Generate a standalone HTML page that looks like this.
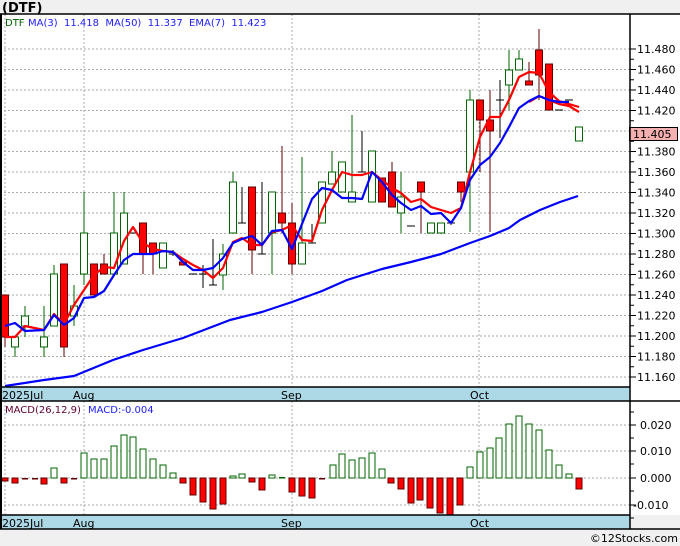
<!DOCTYPE html>
<html><head><meta charset="utf-8"><style>
body{margin:0;width:680px;height:546px;background:#f0f0f0;overflow:hidden;font-family:"DejaVu Sans","Liberation Sans",sans-serif}
svg{position:absolute;left:0;top:0}
</style></head><body>
<svg id="s" width="680" height="546" xmlns="http://www.w3.org/2000/svg" font-family="DejaVu Sans, Liberation Sans, sans-serif">
<rect x="0" y="14" width="680" height="501" fill="#fff"/>
<text x="2" y="12" font-size="13" font-weight="bold" fill="#000">(DTF)</text>
<g id="g"></g>
</svg>
<script>
var g=document.getElementById('g'),h='';
function L(x1,y1,x2,y2,c,w,d){h+='<line x1="'+x1+'" y1="'+y1+'" x2="'+x2+'" y2="'+y2+'" stroke="'+c+'" stroke-width="'+(w||1)+'"'+(d?' stroke-dasharray="'+d+'"':'')+'/>';}
function T(x,y,t,c,s,a){h+='<text x="'+x+'" y="'+y+'" font-size="'+(s||11)+'" fill="'+c+'"'+(a?' text-anchor="'+a+'"':'')+'>'+t+'</text>';}
for(var k=0;k<=16;k++){var y=49+20.5*k;L(0,y,630,y,'#aaa',1,'2,2');L(630,y,636,y,'#000');if(k<16)L(630,y+10.25,634,y+10.25,'#000');
 var p=(11.48-0.02*k).toFixed(3);if(p!='11.400')T(637,y+4,p,'#000');}
[5,84,292,479].forEach(function(x){L(x,14,x,387,'#aaa',1,'2,2');L(x,401,x,515,'#aaa',1,'2,2');});
[[425,'0.020'],[451,'0.010'],[478,'0.000'],[505,'-0.010']].forEach(function(a){L(0,a[0],630,a[0],'#aaa',1,'2,2');L(630,a[0],636,a[0],'#000');T(a[1][0]=='-'?633:640,a[0]+4,a[1],'#000');});
[412,438,464,491,518].forEach(function(y){L(630,y,634,y,'#000');});
var C=[[5,295,337,295,347,'r'],[15,337,347,337,357,'g'],[25,316,326,306,337,'g'],[44,337,347,306,357,'g'],[54,274,326,265,326,'g'],[64,264,347,264,357,'r'],[74,306,316,285,326,'g'],[84,233,274,192,285,'g'],[94,264,295,264,295,'r'],[104,264,274,254,274,'r'],[114,233,274,192,274,'g'],[124,213,264,192,264,'g'],[133,233,233,233,233,'d'],[143,223,254,223,274,'r'],[153,243,254,243,274,'r'],[163,243,268,243,268,'g'],[173,254,254,250,256,'d'],[183,262,265,262,265,'r'],[193,274,274,274,274,'d'],[203,274,274,265,288,'d'],[213,285,285,239,285,'d'],[223,254,275,244,290,'g'],
[233,182,233,172,233,'g'],[242,223,223,187,223,'d'],[252,187,250,187,274,'r'],[262,254,254,182,254,'d'],[272,192,233,192,274,'g'],[282,213,223,146,233,'r'],[292,223,264,203,274,'r'],[302,243,264,157,264,'g'],[312,243,243,224,243,'d'],[322,182,223,182,223,'g'],[332,172,184,151,184,'g'],[342,162,192,162,192,'g'],[352,192,202,115,202,'g'],[362,172,172,131,172,'d'],[372,151,202,151,202,'g'],[382,178,202,178,202,'r'],[392,172,207,162,207,'r'],[401,197,213,172,233,'g'],[411,226,226,226,226,'d'],[421,182,192,182,233,'r'],[431,223,233,223,233,'g'],[441,223,233,223,233,'g'],[451,223,223,221,225,'d'],[461,182,192,182,202,'r'],
[470,100,172,90,232,'g'],[480,100,120,100,172,'r'],[490,120,131,90,232,'r'],[500,100,100,80,138,'d'],[509,70,85,50,110,'g'],[519,59,70,50,70,'g'],[529,81,85,62,85,'r'],[539,50,75,29,100,'r'],[549,64,110,64,110,'r'],[559,110,110,110,110,'d'],[569,100,100,100,100,'d'],[579,127,141,127,141,'g']];
C.forEach(function(c){var x=c[0];if(c[5]=='d'){L(x,c[3],x,c[4],'#000');L(x-4,c[1],x+4,c[1],'#000');return;}
 var col=c[5]=='g'?'#006400':'#600000';L(x,c[3],x,c[4],col);
 h+='<rect x="'+(x-3.5)+'" y="'+c[1]+'" width="7" height="'+Math.max(1,c[2]-c[1])+'" fill="'+(c[5]=='g'?'#fff':'#f00')+'" stroke="'+col+'"/>';});
function P(pts,c){h+='<polyline points="'+pts+'" fill="none" stroke="'+c+'" stroke-width="2.2" stroke-linejoin="round"/>';}
P('5,337 15,337 25,326 44,330 54,314 64,324 74,305 84,290 94,275 104,267 114,268 124,241 133,227 143,243 153,249 163,251 173,252 183,259 193,265 203,270 213,278 223,268 233,242 242,238 252,245 262,245 272,232 282,230 292,225 302,240 312,241 322,210 332,190 342,172 352,175 362,175 372,172 382,180 392,188 401,193 411,202 421,199 431,207 441,210 451,213 461,208 470,172 480,137 490,117 500,117 509,100 519,77 529,72 539,73 549,92 559,101 569,104 579,107','#f00');
P('529,102 539,96 549,100 559,104 569,106 579,112','#f00');
P('5,326 15,323 25,331 44,330 54,315 64,325 74,318 84,298 94,297 104,291 114,275 124,260 133,254 143,254 153,254 163,251 173,252 183,262 193,270 203,270 213,268 223,258 233,243 242,239 252,236 262,245 272,231 282,230 292,249 302,224 312,199 322,188 332,190 342,198 352,198 362,199 372,172 382,182 392,195 401,203 411,210 421,206 431,214 441,213 451,223 461,208 470,180 480,165 490,157 500,143 509,127 519,108 529,101 539,96 549,100 559,102 569,102','#00f');
P('5,386 44,380 74,376 113,360 143,350 183,338 230,320 262,312 292,302 322,291 347,280 382,269 411,262 441,254 470,243 490,236 509,228 520,220 540,210 560,202 578,196','#00f');
T(5,26,'DTF','#006400',10);T(28,26,'MA(3)&#160;&#160;11.418&#160;&#160;MA(50)&#160;&#160;11.337&#160;&#160;EMA(7)&#160;&#160;11.423','#2020ff',10);
h+='<rect x="629.5" y="127.5" width="48" height="13" fill="#f4b0b0" stroke="#000"/>';T(633,138,'11.405','#000');
var M=[[5,-3],[15,-5],[25,-1],[35,-1],[44,-6],[54,10],[64,-5],[74,-1],[84,25],[94,19],[104,19],[114,32],[124,43],[133,41],[143,29],[153,19],[163,13],[173,5],[183,-5],[193,-17],[203,-24],[213,-31],[223,-26],[233,2],[242,4],[252,-4],[262,-12],[272,3],[282,1],[292,-14],[302,-18],[312,-20],[322,-1],[333,13],[342,24],[352,18],[362,20],[372,25],[382,9],[391,-5],[401,-11],[411,-25],[420,-22],[430,-30],[440,-35],[450,-37],[460,-27],[470,11],[480,26],[490,30],[499,40],[509,54],[519,62],[529,54],[539,48],[549,28],[559,13],[569,4],[579,-11]];
M.forEach(function(m){var x=m[0]-3,v=m[1];if(Math.abs(v)<=1){h+='<rect x="'+x+'" y="'+(v>0?477:478)+'" width="6" height="1.5" fill="'+(v>0?'#006400':'#600000')+'"/>';return;}
 if(v>0)h+='<rect x="'+x+'" y="'+(478-v)+'" width="6" height="'+v+'" fill="#fff" stroke="#006400"/>';
 else h+='<rect x="'+x+'" y="478" width="6" height="'+(-v)+'" fill="#f00" stroke="#600000"/>';});
T(5,413,'MACD(26,12,9)','#600030',10);T(88,413,'MACD:-0.004','#2020ff',10);
[[387,401],[515,529]].forEach(function(b){h+='<rect x="0" y="'+b[0]+'" width="630" height="'+(b[1]-b[0])+'" fill="#add8e6"/>';L(0,b[0],630,b[0],'#000',1.5);L(0,b[1],630,b[1],'#000',1.5);
 T(2,b[1]-2,'2025Jul','#000');T(73,b[1]-2,'Aug','#000');T(281,b[1]-2,'Sep','#000');T(470,b[1]-2,'Oct','#000');});
L(630,401,680,401,'#000',1.5);L(630,529,680,529,'#000',1.5);
L(0,14,680,14,'#000',1.5);L(630,14,630,529,'#000',1.5);L(1,14,1,529,'#000',2);
T(678,542,'©12Stocks.com','#000',11,'end');
g.innerHTML=h;
</script>
</body></html>
